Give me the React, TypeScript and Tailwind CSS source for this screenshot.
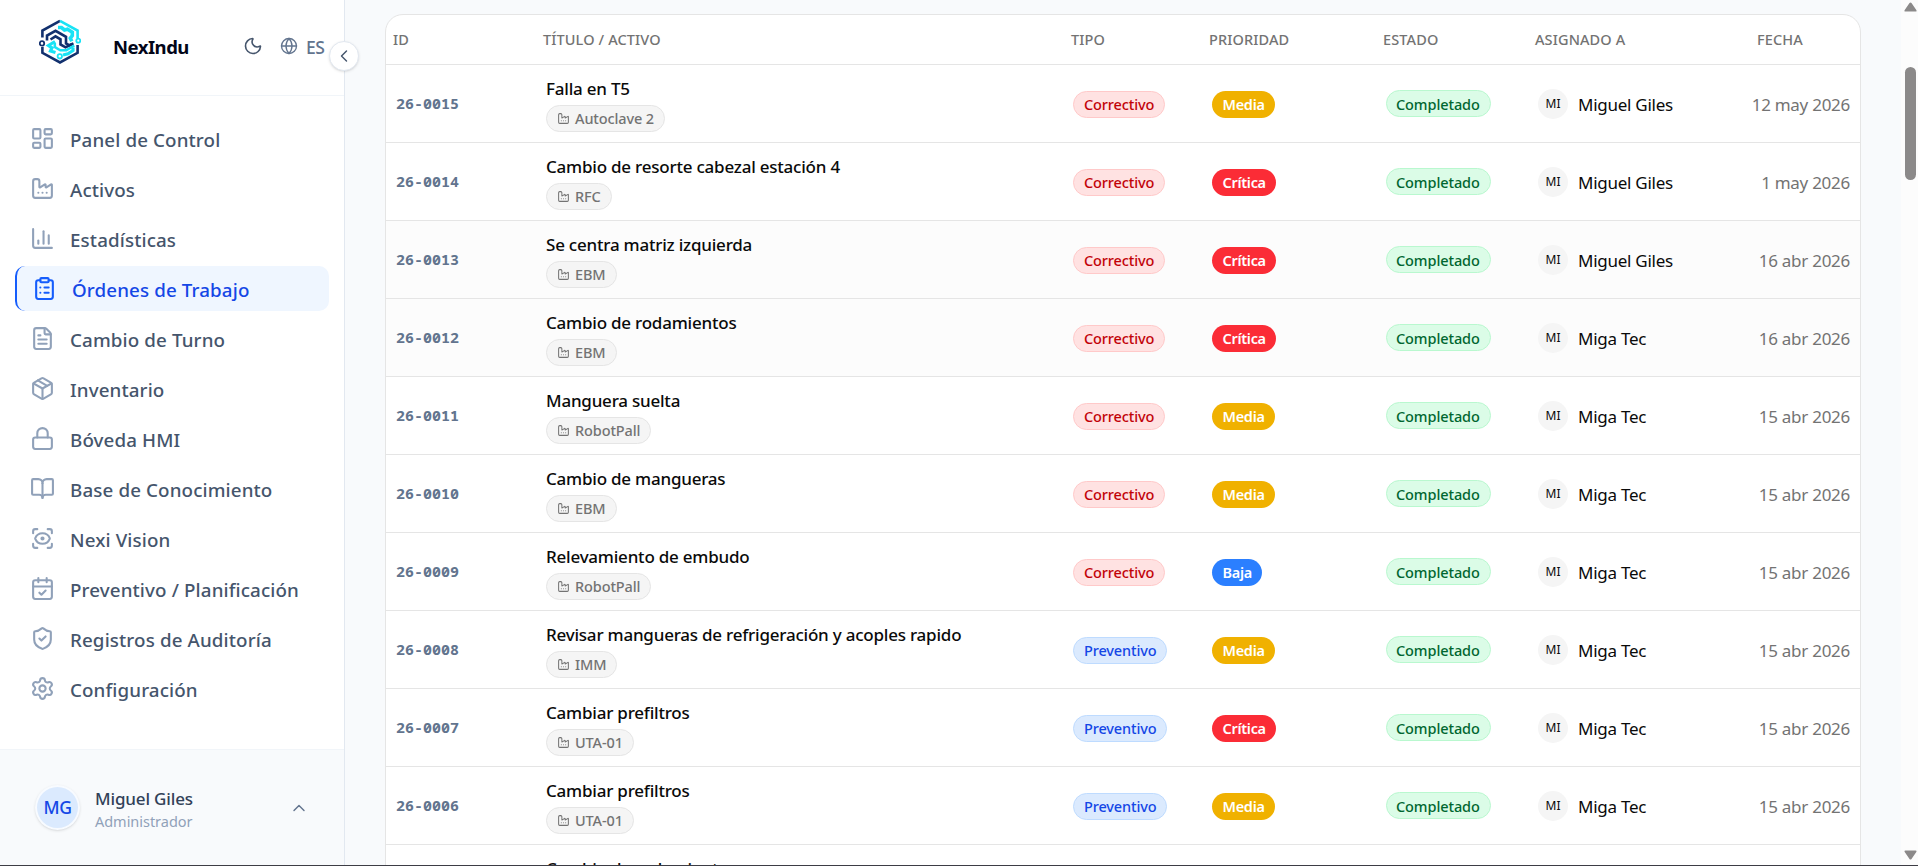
import clsx from "clsx";
import {
  BookOpen,
  CalendarCheck,
  ChartColumn,
  ChevronLeft,
  ChevronUp,
  ClipboardList,
  Factory,
  FileText,
  Globe,
  LayoutDashboard,
  Lock,
  Moon,
  Package,
  ScanEye,
  Settings,
  ShieldCheck,
  type LucideIcon,
} from "lucide-react";

const navItems: { label: string; icon: LucideIcon; active?: boolean }[] = [
  { label: "Panel de Control", icon: LayoutDashboard },
  { label: "Activos", icon: Factory },
  { label: "Estadísticas", icon: ChartColumn },
  { label: "Órdenes de Trabajo", icon: ClipboardList, active: true },
  { label: "Cambio de Turno", icon: FileText },
  { label: "Inventario", icon: Package },
  { label: "Bóveda HMI", icon: Lock },
  { label: "Base de Conocimiento", icon: BookOpen },
  { label: "Nexi Vision", icon: ScanEye },
  { label: "Preventivo / Planificación", icon: CalendarCheck },
  { label: "Registros de Auditoría", icon: ShieldCheck },
  { label: "Configuración", icon: Settings },
];

type Tipo = "Correctivo" | "Preventivo";
type Prioridad = "Media" | "Crítica" | "Baja";

interface Orden {
  id: string;
  titulo: string;
  activo: string;
  tipo: Tipo;
  prioridad: Prioridad;
  asignado: string;
  fecha: string;
  muted?: boolean;
}

const ordenes: Orden[] = [
  { id: "26-0015", titulo: "Falla en T5", activo: "Autoclave 2", tipo: "Correctivo", prioridad: "Media", asignado: "Miguel Giles", fecha: "12 may 2026" },
  { id: "26-0014", titulo: "Cambio de resorte cabezal estación 4", activo: "RFC", tipo: "Correctivo", prioridad: "Crítica", asignado: "Miguel Giles", fecha: "1 may 2026" },
  { id: "26-0013", titulo: "Se centra matriz izquierda", activo: "EBM", tipo: "Correctivo", prioridad: "Crítica", asignado: "Miguel Giles", fecha: "16 abr 2026", muted: true },
  { id: "26-0012", titulo: "Cambio de rodamientos", activo: "EBM", tipo: "Correctivo", prioridad: "Crítica", asignado: "Miga Tec", fecha: "16 abr 2026", muted: true },
  { id: "26-0011", titulo: "Manguera suelta", activo: "RobotPall", tipo: "Correctivo", prioridad: "Media", asignado: "Miga Tec", fecha: "15 abr 2026" },
  { id: "26-0010", titulo: "Cambio de mangueras", activo: "EBM", tipo: "Correctivo", prioridad: "Media", asignado: "Miga Tec", fecha: "15 abr 2026" },
  { id: "26-0009", titulo: "Relevamiento de embudo", activo: "RobotPall", tipo: "Correctivo", prioridad: "Baja", asignado: "Miga Tec", fecha: "15 abr 2026" },
  { id: "26-0008", titulo: "Revisar mangueras de refrigeración y acoples rapido", activo: "IMM", tipo: "Preventivo", prioridad: "Media", asignado: "Miga Tec", fecha: "15 abr 2026" },
  { id: "26-0007", titulo: "Cambiar prefiltros", activo: "UTA-01", tipo: "Preventivo", prioridad: "Crítica", asignado: "Miga Tec", fecha: "15 abr 2026" },
  { id: "26-0006", titulo: "Cambiar prefiltros", activo: "UTA-01", tipo: "Preventivo", prioridad: "Media", asignado: "Miga Tec", fecha: "15 abr 2026" },
  { id: "26-0005", titulo: "Cambio de rodamientos", activo: "EBM", tipo: "Correctivo", prioridad: "Media", asignado: "Miga Tec", fecha: "15 abr 2026" },
];

const tipoStyles: Record<Tipo, string> = {
  Correctivo: "bg-red-100 border-red-200 text-red-700",
  Preventivo: "bg-blue-100 border-blue-200 text-blue-700",
};

const prioridadStyles: Record<Prioridad, string> = {
  Media: "bg-yellow-500",
  Crítica: "bg-red-500",
  Baja: "bg-blue-500",
};

const gridCols = "grid grid-cols-[150px_527px_139px_174px_152px_215px_117px]";

function Logo() {
  return (
    <svg className="w-[42px] h-[46px]" viewBox="39 19 42 46" fill="none">
      <g stroke="#12306e" strokeWidth="2.6">
        <path d="M60 20.8 42.4 30.6v7" />
        <path d="M42.4 47v5.8L60 62.4l17.6-9.6V45" />
        <path d="M47 40.5v-5l8.5-4.7 10.500 6v6.700l3.500 1.800 4-2" />
        <path d="m50.5 39.5 5-3.2 5 3v5.2l5 2.8 6.5-3.3" />
        <circle cx="42" cy="43.4" r="2.2" strokeWidth="1.8" />
      </g>
      <g stroke="#19e3f5" strokeWidth="2.6">
        <path d="m60 20.8 17.6 9.8v7.6" />
        <path d="M58 27.5h3.5l3 2.5 3-.8 4.800 3v3.500l-2 2.500 1.500 3" strokeWidth="3.6" />
        <path d="m55 41.5-6.5 4 3.5 2.3-1.5 3.2 5 1.5" strokeWidth="3.2" />
        <path d="M54.8 43v4l5.5 3.3h6l8-4.8" />
        <path d="m63 55 5-1.2 5-3.3v-3" strokeWidth="3.2" />
        <circle cx="78.3" cy="40.7" r="2" strokeWidth="1.8" />
        <circle cx="59.8" cy="56.3" r="2.2" strokeWidth="1.8" />
      </g>
    </svg>
  );
}

function Sidebar() {
  return (
    <aside className="relative w-[345px] h-full shrink-0 flex flex-col bg-white border-r border-slate-200">
      <div className="h-24 shrink-0 flex items-start border-b border-slate-100 pl-[39px]">
        <div className="pt-[19px]">
          <Logo />
        </div>
        <span className="w-[130px] ml-[32px] mt-[33px] text-[18.5px] leading-7 font-bold tracking-[-0.5px] text-slate-950">
          NexIndu
        </span>
        <Moon className="size-5 mt-[36px] text-slate-600" strokeWidth={1.9} />
        <button className="flex items-center gap-2 ml-[17px] mt-[34px] h-6 text-slate-500">
          <Globe className="size-[18px]" strokeWidth={1.8} />
          <span className="text-[17.5px] font-medium tracking-[-0.6px] mt-0.5">ES</span>
        </button>
      </div>

      {/* Collapse toggle */}
      <button
        aria-label="Contraer menú"
        className="absolute z-10 top-[41px] -right-[15px] size-[30px] rounded-full bg-white border border-slate-200 shadow-sm flex items-center justify-center text-slate-600"
      >
        <ChevronLeft className="size-5" strokeWidth={1.7} />
      </button>

      <nav className="flex-1 flex flex-col gap-[5px] px-[15px] pt-5">
        {navItems.map(({ label, icon: Icon, active }) => (
          <a
            key={label}
            href="#"
            className={clsx(
              "h-[45px] flex items-center gap-[15px] px-[15px] rounded-[10px] text-[18.75px] font-medium tracking-[0.13px]",
              active
                ? "bg-blue-50 text-blue-700 border-l-2 border-blue-600"
                : "text-slate-600",
            )}
          >
            <Icon
              className={clsx(
                "size-[25px] shrink-0",
                active ? "text-blue-600" : "text-slate-400",
              )}
              strokeWidth={2}
            />
            <span className="mt-1">{label}</span>
          </a>
        ))}
      </nav>

      <div className="h-[116px] shrink-0 flex items-center bg-slate-50 border-t border-slate-100 px-[35px]">
        <div className="size-[45px] rounded-full bg-blue-100 border-2 border-white/80 shadow-sm flex items-center justify-center text-[17.5px] font-medium tracking-[-0.4px] text-blue-700">
          MG
        </div>
        <div className="flex-1 pl-[15px] pt-[3px]">
          <p className="text-[17px] leading-[24px] font-medium tracking-[-0.15px] text-slate-700">
            Miguel Giles
          </p>
          <p className="text-[14.5px] leading-5 tracking-[-0.03px] text-slate-400">
            Administrador
          </p>
        </div>
        <ChevronUp className="size-5 text-slate-500" strokeWidth={1.7} />
      </div>
    </aside>
  );
}

function OrdenRow({ orden }: { orden: Orden }) {
  return (
    <div
      className={clsx(
        gridCols,
        "h-[78px] border-b border-neutral-200 items-center",
        orden.muted && "bg-[#fcfcfc]",
      )}
    >
      <div className="px-2.5 pb-0.5 font-['Noto_Sans_Mono','DejaVu_Sans_Mono',monospace] text-[15px] leading-5 font-bold text-slate-500">
        {orden.id}
      </div>
      <div className="px-2.5 flex flex-col items-start gap-[4px]">
        <span className="pt-px text-[17px] leading-[25px] font-medium tracking-[-0.22px] text-neutral-950">
          {orden.titulo}
        </span>
        <span className="h-[27px] flex items-center gap-[5px] px-2.5 rounded-full bg-neutral-100 border border-neutral-200 text-[14.5px] font-medium tracking-[-0.12px] text-neutral-500">
          <Factory className="size-[13px]" strokeWidth={1.9} />
          <span className="pt-px">{orden.activo}</span>
        </span>
      </div>
      <div className="px-2.5 pt-px">
        <span
          className={clsx(
            "inline-flex h-[27px] items-center px-2.5 pt-px rounded-full border text-[14.5px] font-medium tracking-[-0.13px] align-middle",
            tipoStyles[orden.tipo],
          )}
        >
          {orden.tipo}
        </span>
      </div>
      <div className="px-2.5 pt-px">
        <span
          className={clsx(
            "inline-flex h-[27px] items-center px-[10.5px] pt-px rounded-full text-[14.5px] font-semibold tracking-[-0.3px] text-white align-middle",
            prioridadStyles[orden.prioridad],
          )}
        >
          {orden.prioridad}
        </span>
      </div>
      <div className="px-2.5">
        <span className="inline-flex h-[27px] items-center pl-[9px] pr-2.5 pt-0.5 rounded-full bg-green-100 border border-green-200 text-green-800 text-[14.5px] font-medium tracking-[-0.1px] align-middle">
          Completado
        </span>
      </div>
      <div className="px-2.5 flex items-center gap-2.5">
        <span className="size-[30px] rounded-full bg-neutral-100 flex items-center justify-center text-[12px] text-neutral-950">
          MI
        </span>
        <span className="text-[17px] tracking-[-0.26px] text-neutral-950 mt-0.5">
          {orden.asignado}
        </span>
      </div>
      <div className="pr-2.5 pt-0.5 text-right whitespace-nowrap text-[17px] tracking-[-0.27px] text-neutral-500">
        {orden.fecha}
      </div>
    </div>
  );
}

function OrdenesTable() {
  return (
    <div className="border border-neutral-200 rounded-t-[18px] bg-white overflow-hidden">
      <div
        className={clsx(
          gridCols,
          "h-[50px] items-center border-b border-neutral-200 text-[14.5px] font-medium tracking-[0.12px] text-neutral-500 uppercase",
        )}
      >
        <span className="pl-[7px]">ID</span>
        <span className="pl-[7px]">Título / Activo</span>
        <span className="pl-2">Tipo</span>
        <span className="pl-[7px]">Prioridad</span>
        <span className="pl-[7px]">Estado</span>
        <span className="pl-[7px]">Asignado a</span>
        <span className="pl-[14px]">Fecha</span>
      </div>
      {ordenes.map((orden) => (
        <OrdenRow key={orden.id} orden={orden} />
      ))}
    </div>
  );
}

function Scrollbar() {
  return (
    <div className="w-[17px] shrink-0 flex flex-col items-center justify-between bg-[#fcfcfc] pt-[2px] pb-[5px] pl-[2px]">
      <svg width="13" height="10" viewBox="0 0 13 10" fill="#8b8989">
        <path d="M6.5.5q.6 0 1 .6l4.800 7q.8 1.400-.8 1.400h-10q-1.600 0-.8-1.400l4.800-7q.4-.6 1-.6z" />
      </svg>
      <div className="w-[11px] flex-1 pt-[55px]">
        <div className="h-[113px] rounded-full bg-[#8b8989]" />
      </div>
      <svg width="13" height="10" viewBox="0 0 13 10" fill="#8b8989">
        <path d="M6.5 9.5q.6 0 1-.6l4.800-7q.8-1.400-.8-1.400h-10q-1.600 0-.8 1.400l4.800 7q.4.6 1 .6z" />
      </svg>
    </div>
  );
}

export default function App() {
  return (
    <div className="h-[866px] flex flex-col overflow-hidden font-['Noto_Sans','Open_Sans',sans-serif]">
      <div className="flex-1 min-h-0 flex bg-slate-50">
        <Sidebar />
        <main className="flex-1 min-w-0 h-full overflow-hidden px-10 pt-[14px]">
          <OrdenesTable />
        </main>
        <Scrollbar />
      </div>
      <div className="h-px shrink-0 bg-[#3d3d45]" />
    </div>
  );
}
